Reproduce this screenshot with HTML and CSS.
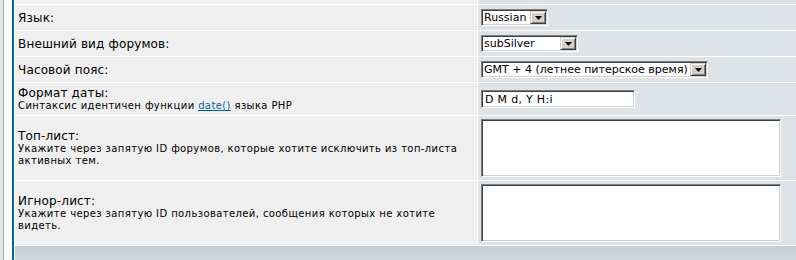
FILE: index.html
```html
<!DOCTYPE html>
<html lang="ru">
<head>
<meta charset="utf-8">
<title>Профиль</title>
<link rel="stylesheet" href="styles.css">
</head>
<body>
<div class="bodyline">
  <div class="forumline">
    <div class="cell row1"></div>
    <div class="cell row2"></div>

    <div class="cell row1"><span class="gen">Язык:</span></div>
    <div class="cell row2">
      <div class="combo w-lang">
        <select class="combo-select"><option>Russian</option></select>
        <span class="combo-btn"><svg width="7" height="4" viewBox="0 0 7 4"><polygon points="0,0 7,0 3.5,4" fill="#000"/></svg></span>
      </div>
    </div>

    <div class="cell row1"><span class="gen">Внешний вид форумов:</span></div>
    <div class="cell row2">
      <div class="combo w-style">
        <select class="combo-select"><option>subSilver</option></select>
        <span class="combo-btn"><svg width="7" height="4" viewBox="0 0 7 4"><polygon points="0,0 7,0 3.5,4" fill="#000"/></svg></span>
      </div>
    </div>

    <div class="cell row1"><span class="gen">Часовой пояс:</span></div>
    <div class="cell row2">
      <div class="combo w-tz">
        <select class="combo-select"><option>GMT + 4 (летнее питерское время)</option></select>
        <span class="combo-btn"><svg width="7" height="4" viewBox="0 0 7 4"><polygon points="0,0 7,0 3.5,4" fill="#000"/></svg></span>
      </div>
    </div>

    <div class="cell row1">
      <span class="gen">Формат даты:</span>
      <span class="gensmall">Синтаксис идентичен функции <a href="#" class="link">date()</a> языка PHP</span>
    </div>
    <div class="cell row2"><input class="post w-date" type="text" value="D M d, Y H:i"></div>

    <div class="cell row1">
      <span class="gen">Топ-лист:</span>
      <span class="gensmall">Укажите через запятую ID форумов, которые хотите исключить из топ-листа активных тем.</span>
    </div>
    <div class="cell row2 top"><textarea class="post area"></textarea></div>

    <div class="cell row1">
      <span class="gen">Игнор-лист:</span>
      <span class="gensmall">Укажите через запятую ID пользователей, сообщения которых не хотите видеть.</span>
    </div>
    <div class="cell row2 top"><textarea class="post area"></textarea></div>

    <div class="catbottom"></div>
  </div>
</div>
</body>
</html>
```
FILE: styles.css
```css
html, body {
  margin: 0;
  padding: 0;
}
body {
  background: #E5E5E5;
  overflow: hidden;
  font-family: "DejaVu Sans", Verdana, sans-serif;
  color: #000;
  height: 260px;
}
.bodyline {
  margin-left: 3px;
  border-left: 1px solid #98AAB1;
  background: #FFFFFF;
  padding-left: 8px;
  height: 260px;
}
.forumline {
  border-left: 2px solid #006699;
  padding-left: 1px;
  background: #FFFFFF;
  display: grid;
  grid-template-columns: 462px 1fr;
  grid-template-rows: 4px 25px 25px 25px 32px 64px 64px 1fr;
  gap: 1px;
  height: 260px;
}
.cell {
  display: flex;
  flex-direction: column;
  justify-content: center;
  align-items: flex-start;
  padding: 0 3px;
  min-width: 0;
}
.cell.top {
  justify-content: flex-start;
  padding-top: 3px;
}
.row1 { background: #EFEFEF; }
.row2 { background: #DEE3E7; }
.gen {
  font-size: 12px;
  line-height: 14px;
  letter-spacing: 0.15px;
}
.gensmall {
  font-size: 10px;
  line-height: 12px;
  letter-spacing: 0.4px;
}
.link {
  color: #006699;
  text-decoration: underline;
}
.catbottom {
  grid-column: 1 / 3;
  background: linear-gradient(#C5CED5, #D3DAE0);
}
.combo {
  display: inline-flex;
  align-items: stretch;
  height: 17px;
  box-sizing: border-box;
  background: #FFFFFF;
  border: 1px solid;
  border-color: #808080 #FFFFFF #FFFFFF #808080;
  box-shadow: inset 1px 1px 0 #404040, inset -1px -1px 0 #D4D0C8;
  padding: 1px;
}
.combo-select {
  appearance: none;
  -webkit-appearance: none;
  border: 0;
  outline: 0;
  background: transparent;
  margin: 0;
  padding: 0 0 0 1px;
  font-family: "DejaVu Sans", Verdana, sans-serif;
  font-size: 11px;
  line-height: 13px;
  letter-spacing: 0;
  color: #000;
  flex: 1 1 auto;
  min-width: 0;
}
.combo-btn {
  flex: 0 0 16px;
  box-sizing: border-box;
  background: #D4D0C8;
  border: 1px solid;
  border-color: #D4D0C8 #404040 #404040 #D4D0C8;
  box-shadow: inset 1px 1px 0 #FFFFFF, inset -1px -1px 0 #808080;
  display: flex;
  align-items: center;
  justify-content: center;
}
.combo-btn svg { display: block; }
.w-lang { width: 67px; }
.w-style { width: 97px; }
.w-tz { width: 227px; }
.post {
  box-sizing: border-box;
  background: #FFFFFF;
  border: 1px solid;
  border-color: #808080 #FFFFFF #FFFFFF #808080;
  box-shadow: inset 1px 1px 0 #404040, inset -1px -1px 0 #D4D0C8;
  font-family: "DejaVu Sans", Verdana, sans-serif;
  font-size: 11px;
  letter-spacing: 0.3px;
  color: #000;
  margin: 0;
  outline: 0;
}
.w-date {
  width: 154px;
  height: 18px;
  padding: 0 3px;
}
.area {
  width: 300px;
  height: 58px;
  resize: none;
  padding: 2px;
}
```
